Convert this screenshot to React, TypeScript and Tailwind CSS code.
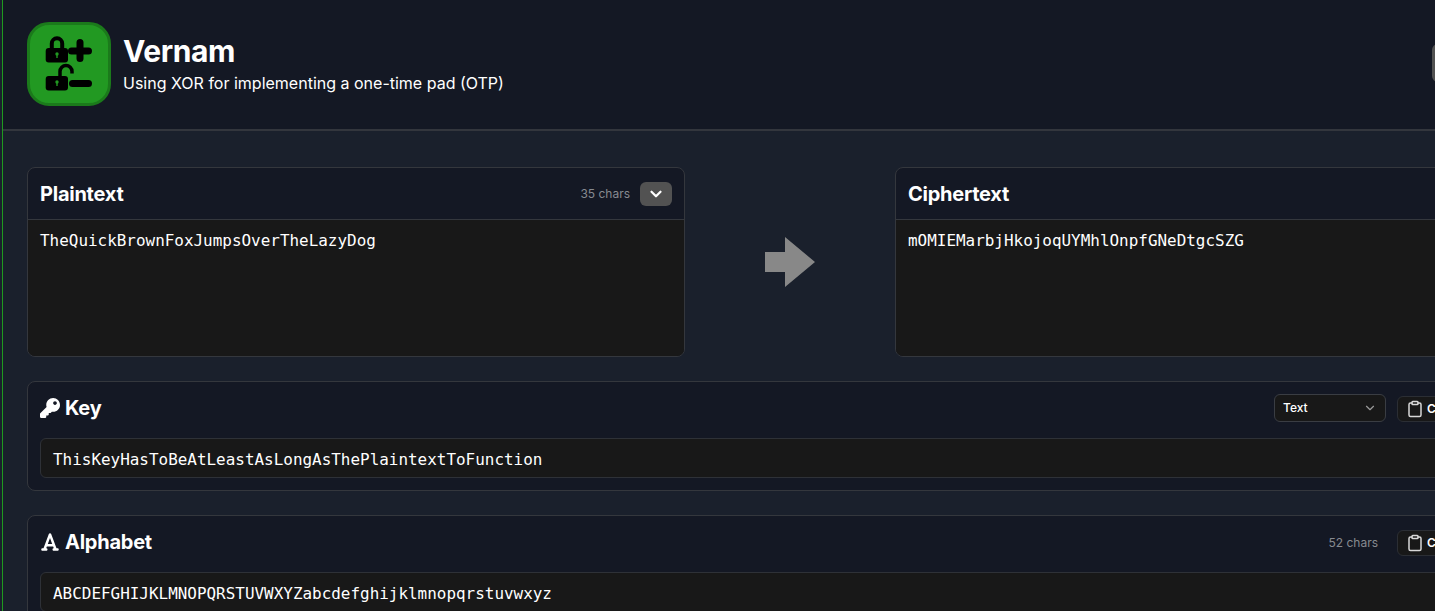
import { ChevronDown, Clipboard } from "lucide-react";
import { FaKey } from "react-icons/fa";
import { FaFont } from "react-icons/fa6";

const sans = "font-['Inter',sans-serif]";
const mono = "font-['DejaVu_Sans_Mono',monospace]";

function Logo() {
  return (
    <div className="w-[84px] h-[84px] shrink-0 rounded-[22px] border-[3px] border-[#1b7a1b] bg-[#229922]">
      <svg width="78" height="78" viewBox="3 3 78 78">
        <path d="M24.8 28v-6.5a5.2 5.2 0 0 1 10.4 0V28" fill="none" stroke="#000" strokeWidth="4" />
        <rect x="18.7" y="26" width="22.3" height="14.5" rx="3" fill="#000" />
        <circle cx="30" cy="32" r="1.7" fill="#229922" />
        <rect x="29.3" y="32" width="1.4" height="4" fill="#229922" />
        <path d="M44.5 29h17M53 20.5v16" fill="none" stroke="#000" strokeWidth="7" strokeLinecap="round" />
        <path d="M33 55v-5.5a6 6 0 0 1 12 0v2" fill="none" stroke="#000" strokeWidth="3.5" />
        <rect x="18.7" y="54" width="22.3" height="14.5" rx="3" fill="#000" />
        <circle cx="30" cy="60" r="1.7" fill="#229922" />
        <rect x="29.3" y="60" width="1.4" height="4" fill="#229922" />
        <path d="M45.5 61.5h16" fill="none" stroke="#000" strokeWidth="7" strokeLinecap="round" />
      </svg>
    </div>
  );
}

function TextCard({ title, text, chars }: { title: string; text: string; chars?: string }) {
  return (
    <div className="w-[658px] h-[190px] shrink-0 flex flex-col rounded-lg border border-[#34373d] bg-[#141824] overflow-hidden">
      <div className="h-[52px] shrink-0 flex items-center justify-between px-3 border-b border-[#34373d]">
        <h2 className="text-xl font-bold tracking-[-0.25px] text-white">{title}</h2>
        {chars && (
          <div className="flex items-center gap-[10px]">
            <span className="pt-px text-xs text-[#878a90]">{chars}</span>
            <button className="w-8 h-6 flex items-center justify-center rounded-md bg-[#525252] text-white">
              <ChevronDown size={18} strokeWidth={3} />
            </button>
          </div>
        )}
      </div>
      <div className={`flex-1 bg-[#181818] px-3 py-[9px] text-[15.95px] leading-6 text-white ${mono}`}>{text}</div>
    </div>
  );
}

function CopyButton() {
  return (
    <button className="w-[80px] h-[26px] flex items-center gap-[3px] pl-2 rounded-md border border-[#2b2e34] bg-[#181818] text-xs font-semibold text-white">
      <Clipboard size={18} className="text-[#d8d8d8]" />
      Copy
    </button>
  );
}

function FieldCard({ icon, title, value, right }: { icon: React.ReactNode; title: string; value: string; right: React.ReactNode }) {
  return (
    <div className="w-[1526px] rounded-lg border border-[#34373d] bg-[#141824] p-3">
      <div className="h-[44px] flex items-start justify-between">
        <h2 className="flex items-center gap-[5px] h-7 text-xl font-bold tracking-[-0.25px] text-white">
          {icon}
          {title}
        </h2>
        <div className="h-7 flex items-end gap-[11px] mr-[63px]">{right}</div>
      </div>
      <div className={`h-10 flex items-center rounded-md border border-[#2e3137] bg-[#181818] px-3 pt-1 text-[15.95px] text-white ${mono}`}>
        {value}
      </div>
    </div>
  );
}

export default function App() {
  return (
    <div className={`w-screen h-screen overflow-hidden bg-[#1a202c] ${sans}`}>
      <div className="w-[1580px] ml-[2px] border-l border-[#1f9a1f] min-h-[611px]">
        <header className="h-[131px] flex items-center justify-between pl-6 pb-[4px] pt-[2px] bg-[#141824] border-b-2 border-[#33363d]">
          <div className="flex items-center gap-3">
            <Logo />
            <div className="pt-px">
              <h1 className="text-[30px] leading-9 font-bold tracking-[-0.4px] text-white">Vernam</h1>
              <p className="text-base leading-6 mt-[2px] text-white">Using XOR for implementing a one-time pad (OTP)</p>
            </div>
          </div>
          <button className="w-[150px] h-[38px] -mt-[2px] rounded-md bg-[#525252] ml-auto" />
        </header>
        <main className="pl-6 pt-9 flex flex-col gap-6">
          <div className="flex items-center">
            <TextCard title="Plaintext" text="TheQuickBrownFoxJumpsOverTheLazyDog" chars="35 chars" />
            <div className="w-[210px] flex justify-center">
              <svg width="50" height="50" viewBox="0 0 50 50">
                <path d="M0 15h20V0l30 25-30 25V35H0z" fill="#888888" />
              </svg>
            </div>
            <TextCard title="Ciphertext" text="mOMIEMarbjHkojoqUYMhlOnpfGNeDtgcSZG" />
          </div>
          <FieldCard
            icon={<FaKey size={20} />}
            title="Key"
            value="ThisKeyHasToBeAtLeastAsLongAsThePlaintextToFunction"
            right={
              <>
                <div className="w-[112px] h-7 flex items-center justify-between px-2 rounded-md border border-[#3a3d43] bg-[#181818] text-xs font-medium text-white">
                  Text
                  <ChevronDown size={14} className="text-[#9a9a9a]" />
                </div>
                <CopyButton />
              </>
            }
          />
          <FieldCard
            icon={<FaFont size={20} />}
            title="Alphabet"
            value="ABCDEFGHIJKLMNOPQRSTUVWXYZabcdefghijklmnopqrstuvwxyz"
            right={
              <>
                <span className="mr-2 text-xs leading-[26px] text-[#878a90]">52 chars</span>
                <CopyButton />
              </>
            }
          />
        </main>
      </div>
    </div>
  );
}
